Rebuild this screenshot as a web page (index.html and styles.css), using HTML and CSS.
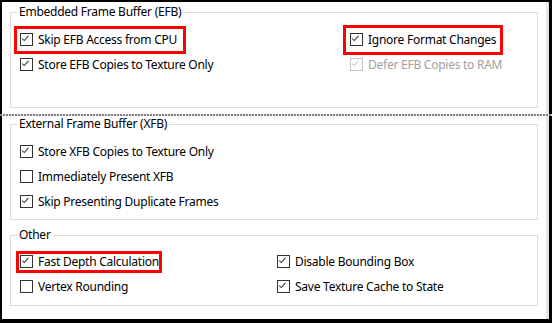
FILE: index.html
```html
<!DOCTYPE html>
<html lang="en">

<head>
    <meta charset="UTF-8">
    <title>Hacks</title>
    <link rel="stylesheet" href="styles.css">
</head>

<body>
    <div class="pane pane-top">
        <fieldset class="group">
            <legend>Embedded Frame Buffer (EFB)</legend>
            <div class="opts cols-efb rows-3">
                <label class="opt mark mark-a"><span class="box"><svg viewBox="0 0 13 13"><polyline points="2.5,6.5 5,9 10,3.5"/></svg></span>Skip EFB Access from CPU</label>
                <label class="opt mark mark-b"><span class="box"><svg viewBox="0 0 13 13"><polyline points="2.5,6.5 5,9 10,3.5"/></svg></span>Ignore Format Changes</label>
                <label class="opt"><span class="box"><svg viewBox="0 0 13 13"><polyline points="2.5,6.5 5,9 10,3.5"/></svg></span>Store EFB Copies to Texture Only</label>
                <label class="opt disabled"><span class="box"><svg viewBox="0 0 13 13"><polyline points="2.5,6.5 5,9 10,3.5"/></svg></span>Defer EFB Copies to RAM</label>
            </div>
        </fieldset>
    </div>
    <div class="splitter"></div>
    <div class="pane pane-bottom">
        <fieldset class="group">
            <legend>External Frame Buffer (XFB)</legend>
            <div class="opts rows-3">
                <label class="opt"><span class="box"><svg viewBox="0 0 13 13"><polyline points="2.5,6.5 5,9 10,3.5"/></svg></span>Store XFB Copies to Texture Only</label>
                <label class="opt"><span class="box"></span>Immediately Present XFB</label>
                <label class="opt"><span class="box"><svg viewBox="0 0 13 13"><polyline points="2.5,6.5 5,9 10,3.5"/></svg></span>Skip Presenting Duplicate Frames</label>
            </div>
        </fieldset>
        <fieldset class="group group-other">
            <legend>Other</legend>
            <div class="opts cols-other">
                <label class="opt mark mark-c"><span class="box"><svg viewBox="0 0 13 13"><polyline points="2.5,6.5 5,9 10,3.5"/></svg></span>Fast Depth Calculation</label>
                <label class="opt"><span class="box"><svg viewBox="0 0 13 13"><polyline points="2.5,6.5 5,9 10,3.5"/></svg></span>Disable Bounding Box</label>
                <label class="opt"><span class="box"></span>Vertex Rounding</label>
                <label class="opt"><span class="box"><svg viewBox="0 0 13 13"><polyline points="2.5,6.5 5,9 10,3.5"/></svg></span>Save Texture Cache to State</label>
            </div>
        </fieldset>
    </div>
</body>

</html>
```

FILE: styles.css
```css
html,
body {
    margin: 0;
    height: 323px;
    background-color: #000;
    overflow: hidden;
}

body {
    padding-top: 2px;
    box-sizing: border-box;
    font-family: "Noto Sans", "Open Sans", sans-serif;
    font-size: 12px;
    letter-spacing: -0.25px;
    color: #000;
}

.pane {
    margin: 0 3px 0 2px;
    background-color: #fff;
    border-right: 3px solid #e6e6e6;
}

.pane-top {
    height: 112px;
    padding-top: 2px;
    box-sizing: border-box;
}

.pane-bottom {
    height: 203px;
    padding-top: 0;
    box-sizing: border-box;
}

.splitter {
    height: 2px;
    background: repeating-linear-gradient(90deg, #808080 0 2px, #e8e8e8 2px 3px);
}

.group {
    margin: 0 8px;
    padding: 7px 9px 5px;
    border: 1px solid #dcdcdc;
}

.group-other {
    margin-top: 7px;
    padding-top: 6px;
    padding-bottom: 6px;
}

.group legend {
    margin-left: -3px;
    padding: 0 2px;
    line-height: 16px;
}

.opts {
    display: grid;
    grid-template-columns: 1fr;
    grid-auto-rows: 25px;
    align-items: center;
}

.rows-3 {
    min-height: 75px;
}

.cols-efb {
    grid-template-columns: 330px 1fr;
}

.cols-other {
    grid-template-columns: 257px 1fr;
}

.opt {
    display: inline-flex;
    align-items: center;
    justify-self: start;
    height: 16px;
    white-space: nowrap;
}

.box {
    width: 11px;
    height: 11px;
    border: 1px solid #333;
    background-color: #fff;
    margin-right: 5px;
}

.box svg {
    display: block;
    width: 11px;
    height: 11px;
    margin: -1px 0 0 -1px;
    overflow: visible;
}

.box polyline {
    fill: none;
    stroke: #333;
    stroke-width: 1.2;
}

.disabled {
    color: #a0a0a0;
}

.disabled .box {
    border-color: #c4c4c4;
}

.disabled .box polyline {
    stroke: #c4c4c4;
}

.mark {
    outline: 3px solid #f00;
}

.mark-a {
    outline-offset: 3px;
    padding-right: 3px;
}

.mark-b {
    outline-offset: 4px;
}

.mark-c {
    outline-offset: 0;
    margin-left: -1px;
    padding-left: 1px;
}
```
